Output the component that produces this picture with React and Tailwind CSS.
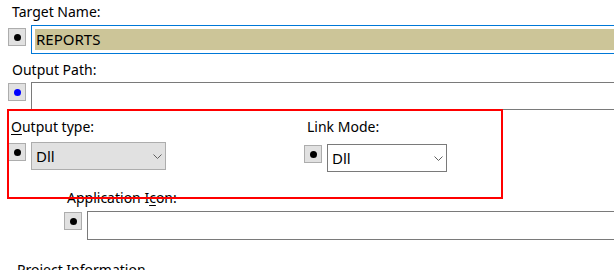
import React from 'react';

const font = { fontFamily: '"Noto Sans", "Open Sans", Arial, sans-serif' };

function DotButton({ color = 'bg-black', className = '' }) {
  return (
    <div className={`w-[18px] h-[18px] bg-[#e1e1e1] border border-[#adadad] flex items-center justify-center shrink-0 ${className}`}>
      <span className={`w-[7px] h-[7px] rounded-full ${color}`} />
    </div>
  );
}

function Chevron() {
  return (
    <svg width="9" height="5" viewBox="0 0 9 5" className="shrink-0">
      <path d="M0.5 0.5 L4.5 4.5 L8.5 0.5" fill="none" stroke="#606060" strokeWidth="1" />
    </svg>
  );
}

function Select({ value, className }) {
  return (
    <div className={`h-[28px] flex items-center justify-between pl-[4px] pr-[3px] shrink-0 ${className}`}>
      <span className="text-[15px] text-black leading-none">{value}</span>
      <Chevron />
    </div>
  );
}

export default function App() {
  return (
    <div className="relative w-[614px] h-[270px] overflow-hidden bg-white text-black text-[14px] leading-[20px]" style={font}>
      {/* Target Name */}
      <div className="h-[25px] pl-[12px] pt-[2px]">Target Name:</div>
      <div className="flex items-start">
        <DotButton className="ml-[8px] mt-[3px]" />
        <div className="ml-[5px] w-[620px] shrink-0 h-[29px] border border-[#0078d7] p-[3px]">
          <div className="h-full bg-[#ccc598] flex items-center pl-[1px] text-[15px] leading-none">REPORTS</div>
        </div>
      </div>

      {/* Output Path */}
      <div className="h-[28px] pl-[12px] pt-[6px]">Output Path:</div>
      <div className="flex items-start">
        <DotButton color="bg-[#0000ff]" className="ml-[8px] mt-[1px]" />
        <div className="ml-[5px] w-[620px] shrink-0 h-[28px] border border-[#7a7a7a]" />
      </div>

      {/* Output type / Link Mode */}
      <div className="flex mt-[7px]">
        <div className="w-[296px] shrink-0 pl-[8px]">
          <div className="h-[22px] pl-[3px]">
            <span className="underline underline-offset-2">O</span>utput type:
          </div>
          <div className="flex items-start mt-[3px]">
            <DotButton className="mt-[1px]" />
            <Select value="Dll" className="ml-[5px] w-[135px] bg-[#e1e1e1] border border-[#adadad]" />
          </div>
        </div>
        <div className="pl-[8px]">
          <div className="h-[22px] pl-[3px]">Link Mode:</div>
          <div className="flex items-start mt-[5px]">
            <DotButton className="mt-[1px]" />
            <Select value="Dll" className="ml-[5px] w-[120px] bg-white border border-[#7a7a7a]" />
          </div>
        </div>
      </div>

      {/* Application Icon */}
      <div className="h-[20px] pl-[67px] mt-[16px]">
        Application I<span className="underline underline-offset-2">c</span>on:
      </div>
      <div className="flex items-start mt-[3px]">
        <DotButton className="ml-[64px] mt-[1px]" />
        <div className="ml-[5px] w-[560px] shrink-0 h-[29px] border border-[#7a7a7a]" />
      </div>

      <div className="pl-[17px] mt-[20px]">Project Information</div>

      {/* annotation box */}
      <div className="absolute left-[7px] top-[109px] w-[496px] h-[90px] border-2 border-[#ff0000] pointer-events-none" />
    </div>
  );
}
